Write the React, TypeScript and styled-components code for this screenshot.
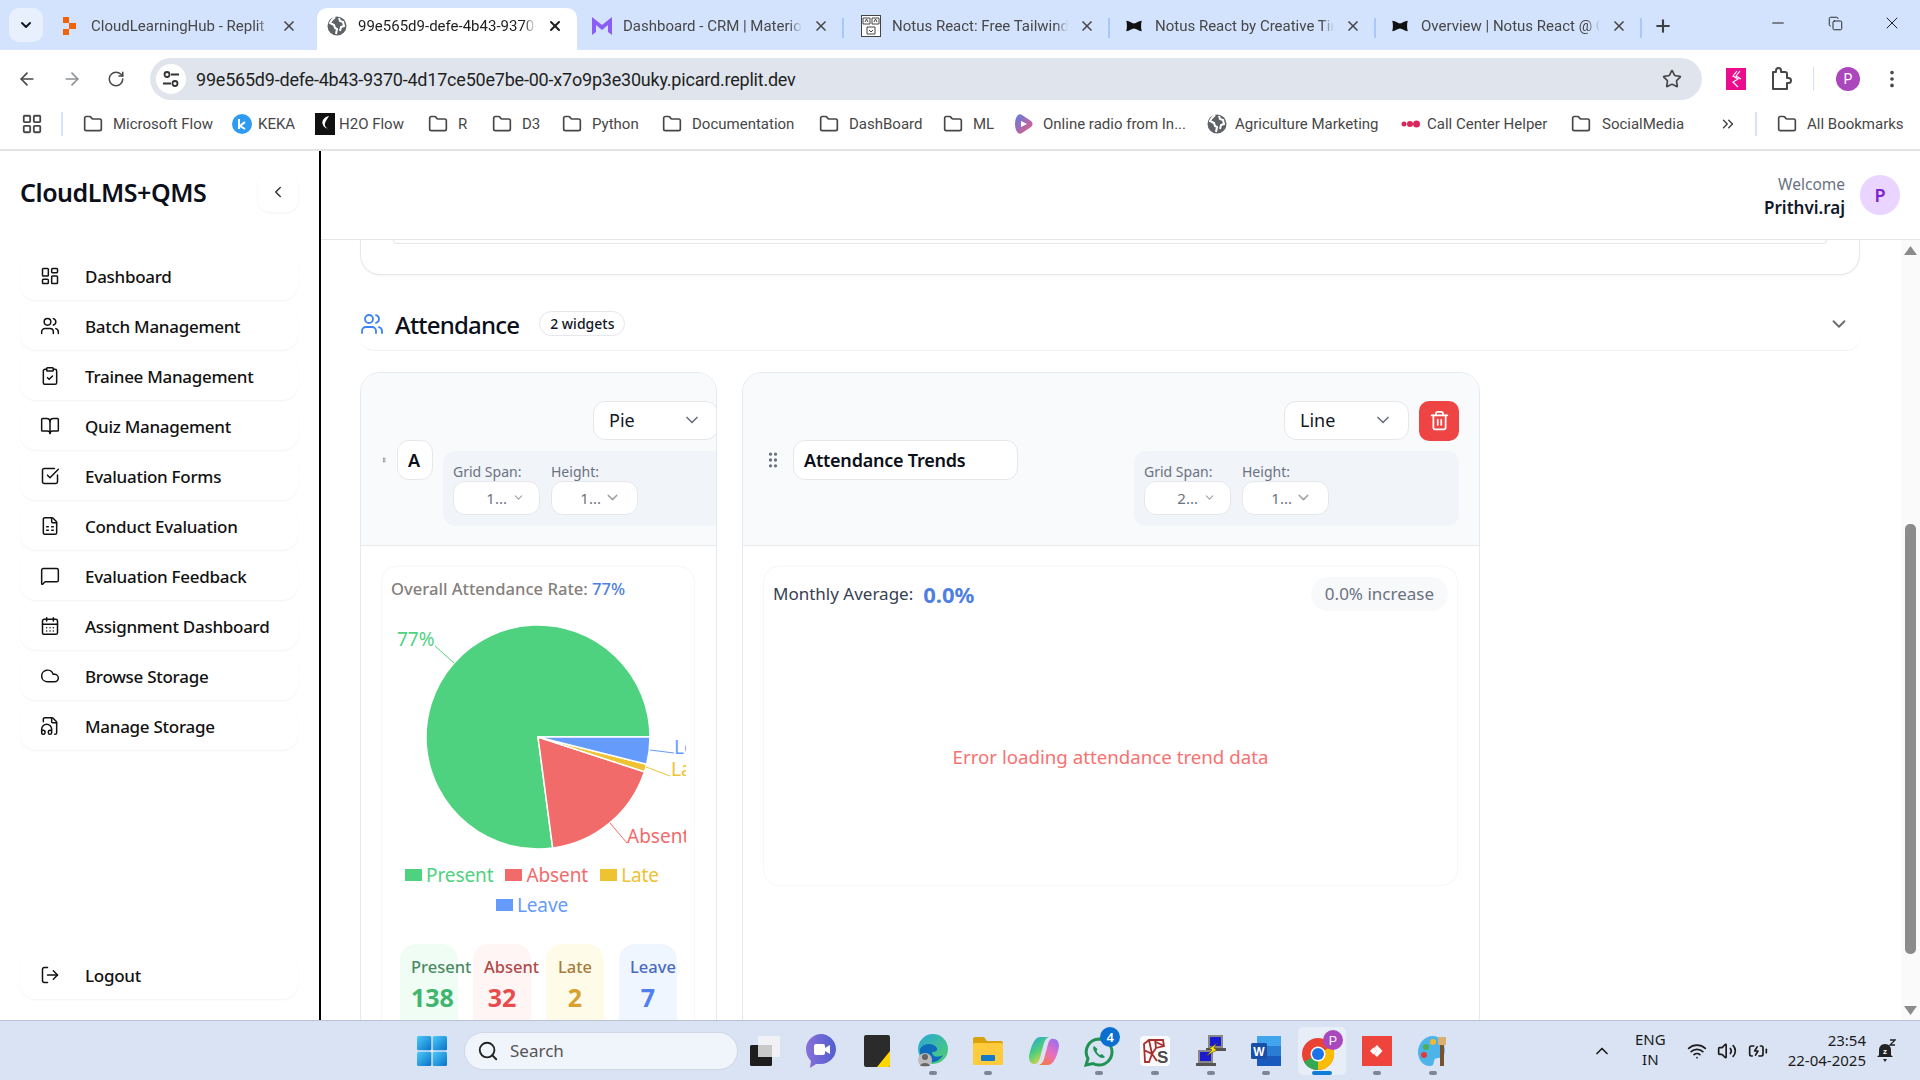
import React from 'react';
import styled, { createGlobalStyle } from 'styled-components';
import {
  ArrowLeft, ArrowRight, BatteryCharging, BookOpen, CalendarDays, ChevronDown, ChevronLeft, ChevronUp,
  ChevronsRight, ClipboardCheck, Cloud, EllipsisVertical, FileAudio2, FileSpreadsheet, Folder,
  GripVertical, LayoutDashboard, LayoutGrid, LogOut, MessageSquare, Minus, Plus, RotateCw, Search,
  SquareCheckBig, Star, Trash2, Users, Volume2, Wifi, X, Copy,
} from 'lucide-react';

const UI = '"Noto Sans", "Open Sans", sans-serif';
const CHROME = 'Roboto, "Noto Sans", sans-serif';

const GlobalStyle = createGlobalStyle`
  html, body { margin: 0; padding: 0; height: 100%; overflow: hidden; background: #fff; }
  #root { height: 100vh; }
  * { box-sizing: border-box; }
`;

const Screen = styled.div`
  height: 1080px;
  display: flex;
  flex-direction: column;
  font-family: ${UI};
  color: #111827;
`;

/* browser chrome */
const TabStrip = styled.div`
  height: 50px;
  background: #d3e3fd;
  display: flex;
  align-items: flex-end;
  padding-left: 9px;
  font-family: ${CHROME};
  flex-shrink: 0;
`;
const TabMenu = styled.div`
  width: 34px;
  height: 34px;
  margin-bottom: 8px;
  margin-right: 2px;
  background: #e8f0fd;
  border-radius: 10px;
  display: flex;
  align-items: center;
  justify-content: center;
`;
const Tab = styled.div<{ $active?: boolean; $width: number; $left: number; $right: number }>`
  width: ${p => p.$width}px;
  height: 42px;
  display: flex;
  align-items: center;
  padding: 0 ${p => p.$right}px 7px ${p => p.$left}px;
  border-radius: 10px 10px 0 0;
  background: ${p => (p.$active ? '#fff' : 'transparent')};
  color: ${p => (p.$active ? '#1f1f1f' : '#474747')};
  flex-shrink: 0;
  gap: 11px;
`;
const TabSep = styled.i`
  width: 2px;
  height: 20px;
  background: #a8c7fa;
  margin: 0 -1px 12px;
  flex-shrink: 0;
`;
const TabIcon = styled.span`
  width: 20px;
  height: 20px;
  display: flex;
  align-items: center;
  justify-content: center;
  flex-shrink: 0;
`;
const TabTitle = styled.span`
  flex: 1;
  font-size: 15px;
  white-space: nowrap;
  overflow: hidden;
  -webkit-mask-image: linear-gradient(90deg, #000 93%, transparent 100%);
  mask-image: linear-gradient(90deg, #000 93%, transparent 100%);
`;
const NewTab = styled.div`
  margin: 0 0 14px 12px;
  color: #3c4043;
  display: flex;
`;
const WindowButtons = styled.div`
  margin-left: auto;
  display: flex;
  align-items: center;
  gap: 1px;
  height: 46px;
  color: #1f1f1f;
  align-self: flex-start;
`;
const WindowButton = styled.div`
  width: 56px;
  display: flex;
  justify-content: center;
`;

const Toolbar = styled.div`
  height: 50px;
  background: #fff;
  display: flex;
  align-items: center;
  padding: 8px 0 0 17px;
  font-family: ${CHROME};
  flex-shrink: 0;
  border-radius: 10px 10px 0 0;
`;
const NavButton = styled.div<{ $muted?: boolean }>`
  width: 45px;
  display: flex;
  color: ${p => (p.$muted ? '#8e9297' : '#474747')};
`;
const UrlBar = styled.div`
  width: 1552px;
  height: 42px;
  margin-left: -2px;
  border-radius: 21px;
  background: #e0e5ed;
  display: flex;
  align-items: center;
  padding: 0 20px 0 6px;
  gap: 10px;
  font-size: 18px;
  letter-spacing: -0.21px;
  color: #1f1f1f;
`;
const SiteInfo = styled.div`
  width: 30px;
  height: 30px;
  border-radius: 50%;
  background: #fff;
  display: flex;
  align-items: center;
  justify-content: center;
`;
const UrlText = styled.span`
  flex: 1;
`;
const ToolbarEnd = styled.div`
  display: flex;
  align-items: center;
  height: 42px;
  margin-left: 24px;
  color: #474747;
`;
const ExtBadge = styled.div`
  width: 20px;
  height: 22px;
  margin-right: 22px;
  background: #ec0c8e;
  display: flex;
  align-items: center;
  justify-content: center;
`;
const ToolSep = styled.i`
  width: 1px;
  height: 24px;
  background: #d3e3fd;
  margin: 0 22px 0 21px;
`;
const ProfileDot = styled.div`
  width: 24px;
  height: 24px;
  border-radius: 50%;
  background: #ab47bc;
  color: #fff;
  font-size: 14px;
  display: flex;
  align-items: center;
  justify-content: center;
  margin-right: 21px;
`;

const Bookmarks = styled.div`
  height: 51px;
  background: #fff;
  display: flex;
  align-items: center;
  font-family: ${CHROME};
  font-size: 15px;
  color: #474747;
  padding: 0 0 1px 21px;
  border-bottom: 2px solid #e3e3e3;
  flex-shrink: 0;
  overflow: hidden;
`;
const AppsIcon = styled.span`
  display: flex;
  flex-shrink: 0;
`;
const BarSep = styled.i`
  width: 2px;
  height: 24px;
  background: #d3e3fd;
  margin: 0 20px 0 18px;
  flex-shrink: 0;
`;
const Mark = styled.div<{ $gap: number }>`
  display: flex;
  align-items: center;
  gap: ${p => p.$gap}px;
  white-space: nowrap;
  margin-right: 22px;
  flex-shrink: 0;
`;
const MarkLabel = styled.span<{ $w: number }>`
  width: ${p => p.$w}px;
  white-space: nowrap;
`;
const MarkIcon = styled.span`
  width: 20px;
  height: 20px;
  display: flex;
  align-items: center;
  justify-content: center;
`;
const MoreMarks = styled.span`
  display: flex;
  margin-left: 16px;
  flex-shrink: 0;
`;

/* application */
const Body = styled.div`
  flex: 1;
  min-height: 0;
  display: flex;
`;
const Sidebar = styled.aside`
  width: 321px;
  border-right: 2px solid #000;
  padding: 21px 21px 21px 20px;
  display: flex;
  flex-direction: column;
  flex-shrink: 0;
`;
const Brand = styled.div`
  display: flex;
  align-items: center;
  justify-content: space-between;
  height: 40px;
  margin-bottom: 40px;
`;
const BrandName = styled.div`
  font-size: 25px;
  font-weight: 600;
  color: #0b0f19;
  letter-spacing: -0.45px;
`;
const CollapseButton = styled.div`
  width: 40px;
  height: 40px;
  border-radius: 12px;
  display: flex;
  align-items: center;
  justify-content: center;
  box-shadow: 0 1px 3px rgba(0, 0, 0, 0.06);
  color: #333;
`;
const NavList = styled.nav`
  display: flex;
  flex-direction: column;
  gap: 2px;
`;
const NavItem = styled.div<{ $bottom?: boolean }>`
  height: 48px;
  border-radius: 16px;
  display: flex;
  align-items: center;
  gap: 25px;
  padding-left: 20px;
  font-size: 17px;
  letter-spacing: -0.28px;
  font-weight: 500;
  color: #111;
  box-shadow: 0 1px 2px rgba(0, 0, 0, 0.05);
  margin-top: ${p => (p.$bottom ? 'auto' : '0')};
`;

const Main = styled.main`
  flex: 1;
  min-width: 0;
  display: flex;
  flex-direction: column;
`;
const TopBar = styled.header`
  height: 89px;
  border-bottom: 1px solid #e5e7eb;
  display: flex;
  align-items: center;
  justify-content: flex-end;
  padding: 0 20px 0 0;
  gap: 15px;
  flex-shrink: 0;
`;
const Welcome = styled.div`
  text-align: right;
  padding-top: 3px;
`;
const WelcomeLabel = styled.div`
  font-size: 15.5px;
  line-height: 22px;
  color: #6b7280;
`;
const WelcomeName = styled.div`
  font-size: 17px;
  line-height: 25px;
  font-weight: 600;
  color: #111827;
`;
const Avatar = styled.div`
  width: 40px;
  height: 40px;
  border-radius: 50%;
  background: #e9d5ff;
  color: #7e22ce;
  font-size: 18px;
  font-weight: 600;
  display: flex;
  align-items: center;
  justify-content: center;
`;
const ScrollArea = styled.div`
  flex: 1;
  min-height: 0;
  display: flex;
  overflow: hidden;
`;
const Content = styled.div`
  flex: 1;
  min-width: 0;
  padding: 0 41px 0 39px;
`;
const CroppedCard = styled.div`
  height: 35px;
  border: 1px solid #e5e7eb;
  border-top: 0;
  border-radius: 0 0 20px 20px;
  padding: 0 32px;
  box-shadow: 0 1px 2px rgba(0, 0, 0, 0.04);
`;
const CroppedInner = styled.div`
  height: 4px;
  border: 1px solid #e5e7eb;
  border-top: 0;
  border-radius: 0 0 12px 12px;
`;
const SectionHead = styled.div`
  height: 54px;
  margin-top: 22px;
  display: flex;
  align-items: center;
  border-bottom: 1px solid #eef0f3;
  border-radius: 0 0 14px 14px;
  padding-right: 10px;
`;
const SectionTitle = styled.h2`
  margin: 2px 0 0 11px;
  font-size: 24px;
  line-height: 34px;
  font-weight: 500;
  letter-spacing: -0.8px;
  color: #0b0f19;
`;
const CountBadge = styled.span`
  margin-left: 20px;
  height: 25px;
  padding: 0 10px;
  border: 1px solid #e5e7eb;
  border-radius: 13px;
  font-size: 14px;
  font-weight: 500;
  display: flex;
  align-items: center;
`;
const SectionToggle = styled.div`
  margin-left: auto;
  display: flex;
  color: #6b6b6b;
`;
const CardGrid = styled.div`
  margin-top: 21px;
  display: grid;
  grid-template-columns: 357px 738px;
  gap: 25px;
`;
const Card = styled.section`
  height: 780px;
  border: 1px solid #e5eaf2;
  border-radius: 20px;
  overflow: hidden;
  background: #fff;
`;
const CardHead = styled.div`
  height: 173px;
  background: #f9fafb;
  border-bottom: 1px solid #e8eaee;
  display: flex;
  align-items: center;
  justify-content: space-between;
  padding: 8px 20px 0;
  gap: 10px;
`;
const TitleGroup = styled.div`
  display: flex;
  align-items: center;
  gap: 10px;
  flex-shrink: 0;
  margin-bottom: 6px;
`;
const Grip = styled.span<{ $tiny?: boolean }>`
  display: flex;
  width: ${p => (p.$tiny ? 6 : 20)}px;
  color: #6b7280;
  justify-content: center;
  flex-shrink: 0;
`;
const TitleInput = styled.div<{ $clip?: boolean }>`
  width: ${p => (p.$clip ? 36 : 225)}px;
  height: 40px;
  border: 1px solid #e5e7eb;
  border-radius: 12px;
  background: #fff;
  font-size: 18px;
  font-weight: 600;
  letter-spacing: -0.22px;
  color: #0b0f19;
  display: flex;
  align-items: center;
  padding-left: 10px;
  overflow: hidden;
  white-space: nowrap;
`;
const Controls = styled.div`
  width: 325px;
  flex-shrink: 0;
  display: flex;
  flex-direction: column;
  gap: 10px;
`;
const ControlRow = styled.div`
  display: flex;
  justify-content: flex-end;
  gap: 10px;
`;
const Picker = styled.div`
  width: 125px;
  height: 39px;
  border: 1px solid #e5e7eb;
  border-radius: 12px;
  background: #fff;
  font-size: 18px;
  color: #111827;
  display: flex;
  align-items: center;
  justify-content: space-between;
  padding: 0 15px;
`;
const DeleteButton = styled.div`
  width: 40px;
  height: 40px;
  border-radius: 10px;
  background: #ef4444;
  color: #fff;
  display: flex;
  align-items: center;
  justify-content: center;
`;
const SizePanel = styled.div`
  height: 75px;
  background: #f1f4f8;
  border-radius: 12px;
  padding: 11px 10px 0;
  display: flex;
  gap: 11px;
`;
const SizeField = styled.div`
  width: 87px;
`;
const SizeLabel = styled.div`
  font-size: 14px;
  line-height: 19px;
  color: #6b7280;
  white-space: nowrap;
`;
const SizeSelect = styled.div<{ $pad: number; $gap: number }>`
  width: 87px;
  height: 34px;
  border: 1px solid #e5e7eb;
  border-radius: 12px;
  background: #fff;
  font-size: 15px;
  color: #6b7280;
  display: flex;
  align-items: center;
  justify-content: flex-end;
  padding-right: ${p => p.$pad}px;
  gap: ${p => p.$gap}px;
`;
const SizeChevron = styled.span`
  display: flex;
  color: #a3a3a3;
`;
const CardBody = styled.div`
  padding: 20px 21px 0 20px;
`;
const PieBox = styled.div`
  border: 1px solid #f7f7f8;
  border-radius: 16px;
  padding: 9px 10px 0 9px;
  height: 560px;
  box-shadow: 0 -1px 2px rgba(0, 0, 0, 0.015);
`;
const RateLine = styled.div`
  font-size: 16.6px;
  line-height: 26px;
  font-weight: 500;
  color: #85807c;
  white-space: nowrap;
`;
const RateValue = styled.span`
  color: #4f7fe3;
`;
const PieChart = styled.svg`
  display: block;
  margin-top: 10px;
  font-family: ${UI};
  font-size: 19px;
`;
const Legend = styled.div`
  margin: 0 11px 0 0;
  display: flex;
  flex-wrap: wrap;
  justify-content: center;
  column-gap: 12px;
  row-gap: 0;
`;
const LegendItem = styled.div<{ $color: string }>`
  display: flex;
  align-items: center;
  gap: 4px;
  height: 30px;
  font-size: 19px;
  letter-spacing: -0.1px;
  color: ${p => p.$color};
`;
const LegendSwatch = styled.i<{ $color: string }>`
  width: 17px;
  height: 12px;
  background: ${p => p.$color};
`;
const StatRow = styled.div`
  margin-top: 24px;
  padding-left: 9px;
  display: flex;
  gap: 15px;
`;
const StatBox = styled.div<{ $bg: string }>`
  width: 58px;
  height: 90px;
  border-radius: 16px;
  background: ${p => p.$bg};
  padding: 10px 11px 0;
  text-align: center;
`;
const StatLabel = styled.div<{ $color: string }>`
  font-size: 16.5px;
  line-height: 26px;
  font-weight: 500;
  color: ${p => p.$color};
  white-space: nowrap;
`;
const StatValue = styled.div<{ $color: string }>`
  font-size: 25px;
  line-height: 34px;
  font-weight: 700;
  color: ${p => p.$color};
`;
const TrendBox = styled.div`
  height: 320px;
  border: 1px solid #f7f7f8;
  border-radius: 16px;
  padding: 9px 9px 0 9px;
  display: flex;
  flex-direction: column;
  box-shadow: 0 -1px 2px rgba(0, 0, 0, 0.015);
`;
const TrendHead = styled.div`
  display: flex;
  align-items: center;
  height: 35px;
`;
const TrendLabel = styled.span`
  font-size: 17px;
  color: #374151;
`;
const TrendValue = styled.span`
  margin-left: 10px;
  font-size: 22px;
  font-weight: 700;
  color: #4f7fe3;
`;
const TrendPill = styled.span`
  margin-left: auto;
  height: 34px;
  border-radius: 17px;
  background: #f8f9fb;
  padding: 0 14px;
  font-size: 17px;
  color: #6b7280;
  display: flex;
  align-items: center;
`;
const TrendError = styled.div`
  flex: 1;
  display: flex;
  align-items: center;
  justify-content: center;
  padding-top: 16px;
  font-size: 18.7px;
  color: #f87171;
`;
const ScrollTrack = styled.div`
  width: 19px;
  background: #fafafa;
  position: relative;
  flex-shrink: 0;
`;
const ScrollArrow = styled.svg<{ $down?: boolean }>`
  position: absolute;
  left: 3px;
  top: ${p => (p.$down ? 'auto' : '6px')};
  bottom: ${p => (p.$down ? '5px' : 'auto')};
`;
const ScrollThumb = styled.div`
  position: absolute;
  left: 4px;
  right: 4px;
  top: 284px;
  height: 430px;
  background: #8b8b8b;
  border-radius: 5px;
`;

/* windows taskbar */
const Taskbar = styled.footer`
  height: 60px;
  background: #d9e3f4;
  border-top: 1px solid #b9c2d1;
  display: flex;
  align-items: center;
  padding-left: 417px;
  flex-shrink: 0;
  font-family: ${UI};
  position: relative;
`;
const SearchBox = styled.div`
  width: 274px;
  height: 38px;
  margin-left: 17px;
  border-radius: 19px;
  background: #f0f4fb;
  border: 1px solid #d0d8e6;
  display: flex;
  align-items: center;
  padding-left: 12px;
  gap: 11px;
  font-size: 17px;
  color: #555;
`;
const AppSlot = styled.div<{ $active?: boolean }>`
  width: 55.6px;
  height: 48px;
  display: flex;
  align-items: center;
  justify-content: center;
  position: relative;
  flex-shrink: 0;
  &::before {
    content: '';
    position: absolute;
    inset: 0 4px;
    border-radius: 5px;
    background: ${p => (p.$active ? '#e8eef8' : 'transparent')};
  }
  svg {
    position: relative;
  }
`;
const AppDot = styled.i<{ $active?: boolean }>`
  position: absolute;
  left: 50%;
  bottom: 0;
  transform: translateX(-50%);
  width: ${p => (p.$active ? 20 : 8)}px;
  height: 4px;
  border-radius: 2px;
  background: ${p => (p.$active ? '#0f7dd6' : '#7d8694')};
`;
const AppBadge = styled.span`
  position: absolute;
  top: 0;
  right: 7px;
  width: 20px;
  height: 20px;
  border-radius: 50%;
  background: #0a6fd0;
  color: #fff;
  font-size: 13px;
  font-weight: 600;
  display: flex;
  align-items: center;
  justify-content: center;
`;
const Tray = styled.div`
  position: absolute;
  right: 0;
  top: 0;
  bottom: 0;
  display: flex;
  align-items: center;
  color: #1b1b1b;
  font-size: 15px;
`;
const TrayIcons = styled.div`
  display: flex;
  align-items: center;
  gap: 10.5px;
  margin: 0 20px 0 21px;
`;
const TrayLang = styled.div`
  display: flex;
  flex-direction: column;
  line-height: 20px;
  text-align: center;
  margin: -3px 0 0 23px;
`;
const TrayClock = styled.div`
  display: flex;
  flex-direction: column;
  line-height: 20px;
  text-align: right;
  margin-top: -2px;
`;
const BellSlot = styled.div`
  width: 54px;
  display: flex;
  justify-content: center;
  padding: 0 24px 0 10px;
`;

/* little drawings */
const ReplitIcon = () => (
  <svg width="14" height="18" viewBox="0 0 14 18"><rect x="0" y="0" width="6" height="6" fill="#f26207" /><rect x="6" y="6" width="7" height="6" fill="#f26207" /><rect x="0" y="12" width="6" height="6" fill="#f26207" /></svg>
);
const GlobeIcon = ({ size = 20 }: { size?: number }) => (
  <svg width={size} height={size} viewBox="0 0 20 20"><circle cx="10" cy="10" r="9.5" fill="#5f6368" /><path d="M8 1c-2 2-4 3-5 6l4 2 1 3 2 1-1 5M12 2l1 3 3 1 1 4-3 1-1 4" stroke="#fff" strokeWidth="2" fill="none" /></svg>
);
const MuiIcon = () => (
  <svg width="20" height="18" viewBox="0 0 20 18"><path d="M0 0l10 8 10-8v18l-4-3V8l-6 5-6-5v7l-4 3z" fill="#8b5cf6" /></svg>
);
const NotusFace = () => (
  <svg width="20" height="22" viewBox="0 0 20 22"><rect x="0.5" y="0.5" width="19" height="21" fill="#fff" stroke="#444" /><path d="M2 3h7v6H2zM11 3h7v6h-7zM6 12h8v7H6z" fill="none" stroke="#444" /><path d="M4 7l1.5-3L7 7M13 7l1.5-3L16 7M8 15l2 2 2-2" fill="none" stroke="#444" /></svg>
);
const BowTie = () => (
  <svg width="18" height="12" viewBox="0 0 20 14"><path d="M1 1c4 0 6 3 9 3s5-3 9-3c-1 4-1 8 0 12-4 0-6-3-9-3s-5 3-9 3c1-4 1-8 0-12z" fill="#111" /></svg>
);
const KekaIcon = () => (
  <svg width="20" height="20" viewBox="0 0 20 20"><circle cx="10" cy="10" r="10" fill="#2f9bf0" /><path d="M7 5v10M13 8l-5 4 5 3" stroke="#fff" strokeWidth="2" fill="none" /></svg>
);
const H2oIcon = () => (
  <svg width="20" height="22" viewBox="0 0 20 22"><rect width="20" height="22" fill="#111" /><path d="M14 3c-5 1-8 5-6 9 1 3 5 3 6 6-2-4-5-4-4-8 1-3 3-5 4-7z" fill="#fff" /></svg>
);
const RadioIcon = () => (
  <svg width="18" height="20" viewBox="0 0 18 20"><defs><linearGradient id="rg" x1="0" y1="0" x2="1" y2="1"><stop offset="0" stopColor="#5b7fe8" /><stop offset="1" stopColor="#ef5a7a" /></linearGradient></defs><path d="M3 1c1-1 3-1 4 0l9 6c2 1.500 2 4.500 0 6l-9 6c-1 1-3 1-4 0-2-2-3-5-3-9s1-7 3-9z" fill="url(#rg)" /><path d="M6 7l6 3-6 3z" fill="#fff" /></svg>
);
const DotsIcon = () => (
  <svg width="20" height="8" viewBox="0 0 20 8"><circle cx="3" cy="4" r="2.500" fill="#d9275e" /><circle cx="9" cy="4" r="3" fill="#d9275e" /><circle cx="15.500" cy="4" r="3.500" fill="#d9275e" /></svg>
);
const TuneIcon = () => (
  <svg width="18" height="18" viewBox="0 0 18 18" fill="none" stroke="#333" strokeWidth="1.800"><circle cx="5" cy="4.500" r="2.500" /><path d="M9 4.500h8M1 13.500h8" /><circle cx="13" cy="13.500" r="2.500" /></svg>
);
const ExtensionIcon = () => (
  <svg width="24" height="24" viewBox="0 0 24 24" fill="none" stroke="#474747" strokeWidth="2" strokeLinejoin="round"><path d="M20.500 11H19V7c0-1.100-.9-2-2-2h-4V3.500C13 2.120 11.880 1 10.500 1S8 2.120 8 3.500V5H5v17h14v-6h1.500c1.380 0 2.500-1.120 2.500-2.500S21.880 11 20.500 11z" /></svg>
);
const StartIcon = () => (
  <svg width="30" height="30" viewBox="0 0 30 30"><defs><linearGradient id="st" x1="0" y1="0" x2="1" y2="1"><stop offset="0" stopColor="#4cc9fb" /><stop offset="1" stopColor="#0a72c8" /></linearGradient></defs><rect width="14.300" height="14.300" rx="1.500" fill="url(#st)" /><rect x="15.700" width="14.300" height="14.300" rx="1.500" fill="url(#st)" /><rect y="15.700" width="14.300" height="14.300" rx="1.500" fill="url(#st)" /><rect x="15.700" y="15.700" width="14.300" height="14.300" rx="1.500" fill="url(#st)" /></svg>
);
const TaskViewIcon = () => (
  <svg width="32" height="30" viewBox="0 0 32 30"><rect x="0" y="9" width="22" height="21" rx="1.500" fill="#1d1d1d" /><rect x="8" y="0" width="22" height="21" rx="1.500" fill="#f4f4f4" fillOpacity=".85" /><rect x="8" y="9" width="14" height="12" fill="#c9c9c9" /></svg>
);
const MeetIcon = () => (
  <svg width="30" height="34" viewBox="0 0 30 34"><defs><linearGradient id="mt" x1="0" y1="0" x2="1" y2="0"><stop offset="0" stopColor="#8a6fd8" /><stop offset="1" stopColor="#4f5fd0" /></linearGradient></defs><path d="M15 0c8 0 15 7 15 15s-7 15-15 15c-2 0-3 0-5 0l-6 4 1-7c-3-3-5-7-5-12C0 7 7 0 15 0z" fill="url(#mt)" /><rect x="8" y="10" width="11" height="11" rx="2" fill="#fff" /><path d="M19 14l5-3v9l-5-3z" fill="#fff" /></svg>
);
const StickyIcon = () => (
  <svg width="26" height="32" viewBox="0 0 26 32"><rect width="26" height="32" rx="2" fill="#2b2b2b" /><path d="M13 32l13-16v14a2 2 0 0 1-2 2z" fill="#ffd600" /></svg>
);
const EdgeIcon = () => (
  <svg width="32" height="34" viewBox="0 0 32 34"><defs><linearGradient id="ed" x1="0" y1="0" x2="1" y2="1"><stop offset="0" stopColor="#2aa7d8" /><stop offset="1" stopColor="#4fd06a" /></linearGradient></defs><circle cx="16" cy="15" r="15" fill="url(#ed)" /><path d="M3 15c3-6 13-7 17-1 1 3-2 4-5 4 0 5 6 6 11 3-3 6-9 8-14 7-6-2-10-7-9-13z" fill="#0f6cbd" /><circle cx="8" cy="26" r="7" fill="#bcbcbc" /><circle cx="8" cy="23" r="3" fill="#666" /><path d="M3 32c1-4 9-4 10 0z" fill="#666" /></svg>
);
const FolderApp = () => (
  <svg width="30" height="28" viewBox="0 0 30 28"><path d="M0 2a2 2 0 0 1 2-2h9l3 4h14a2 2 0 0 1 2 2v2H0z" fill="#d9a20d" /><rect y="6" width="30" height="22" rx="1.500" fill="#ffcb3d" /><rect x="8" y="18" width="14" height="6" rx="1" fill="#1678c8" /></svg>
);
const CopilotIcon = () => (
  <svg width="30" height="28" viewBox="0 0 30 28"><defs><linearGradient id="cpa" x1="0" y1="0" x2="0.6" y2="1"><stop offset="0" stopColor="#1f9fe6" /><stop offset=".55" stopColor="#4fcf7a" /><stop offset="1" stopColor="#f5d040" /></linearGradient><linearGradient id="cpb" x1="0.8" y1="0" x2="0.2" y2="1"><stop offset="0" stopColor="#9b6ff0" /><stop offset=".5" stopColor="#e86fc0" /><stop offset="1" stopColor="#f57a3c" /></linearGradient></defs><path d="M11 0h9c-3 1-4 3-5 6l-4 15c-1 4-3 6-6 6-3 0-5-3-5-7 1-8 5-20 11-20z" fill="url(#cpa)" /><path d="M19 28h-9c3-1 4-3 5-6l4-15c1-4 3-6 6-5 3 0 5 3 5 7-1 8-5 19-11 19z" fill="url(#cpb)" /></svg>
);
const WhatsappIcon = () => (
  <svg width="30" height="32" viewBox="0 0 30 32"><path d="M15 4a13 13 0 0 1 0 26c-2.500 0-4.500-.500-6-1.500L2 30l2-6.500A13 13 0 0 1 15 4z" fill="none" stroke="#1f9254" strokeWidth="3" /><path d="M10 11c-2 2 0 6 3 9s6 4 8 2l-3-3-2 1c-1-.500-3-2.500-3.500-4l1-2z" fill="#1f9254" /></svg>
);
const SnipIcon = () => (
  <svg width="30" height="30" viewBox="0 0 30 30"><rect width="30" height="30" rx="4" fill="#fbfbfb" /><path d="M4 8l5-4h14l1 6-8 2-4 6-3 8H5zM9 4l3 14M4 14l8 4 5 7M16 12l-1-8M24 10l-8-4" stroke="#a92f2f" strokeWidth="1.800" fill="none" /><text x="17" y="27" fontSize="17" fontWeight="700" fill="#4a4a4a" fontFamily="Liberation Sans, sans-serif">S</text></svg>
);
const NetworkIcon = () => (
  <svg width="32" height="32" viewBox="0 0 32 32"><rect x="14" y="1" width="13" height="11" fill="#1a1ad0" stroke="#888" strokeWidth="2" /><rect x="11" y="13" width="20" height="3" fill="#555" /><rect x="4" y="16" width="13" height="11" fill="#1a1ad0" stroke="#888" strokeWidth="2" /><rect x="1" y="28" width="20" height="3" fill="#555" /><path d="M22 8l-8 6 3 1-6 6 11-6-3-2z" fill="#ffe000" stroke="#333" strokeWidth=".6" /></svg>
);
const WordIcon = () => (
  <svg width="30" height="30" viewBox="0 0 30 30"><rect x="6" width="24" height="10" fill="#41a5ee" /><rect x="6" y="10" width="24" height="10" fill="#2b7cd3" /><rect x="6" y="20" width="24" height="10" fill="#185abd" /><rect y="7" width="16" height="16" rx="1.500" fill="#1a4fa8" /><text x="8" y="20" fontSize="12" fontWeight="700" textAnchor="middle" fill="#fff" fontFamily="Liberation Sans, sans-serif">W</text></svg>
);
const ChromeIcon = () => (
  <svg width="44" height="42" viewBox="0 0 44 42"><circle cx="18" cy="24" r="16" fill="#ea4335" /><path d="M18 24L4 32a16 16 0 0 0 14 8z" fill="#34a853" /><path d="M18 24l14-8a16 16 0 0 1-14 24z" fill="#fbbc04" /><circle cx="18" cy="24" r="7.500" fill="#fff" /><circle cx="18" cy="24" r="6" fill="#1a73e8" /><circle cx="33" cy="10" r="10" fill="#ab47bc" /><text x="33" y="14.500" fontSize="12.500" textAnchor="middle" fill="#fff" fontFamily="Liberation Sans, sans-serif">P</text></svg>
);
const AnyDeskIcon = () => (
  <svg width="30" height="30" viewBox="0 0 30 30"><rect width="30" height="30" fill="#ef443b" /><path d="M15 9l5.500 6-5.500 6-3-3 3-3-3-3z" fill="#fff" /><path d="M8 15l3.500-3.500 3.500 3.500-3.500 3.500z" fill="#fff" /></svg>
);
const PaintIcon = () => (
  <svg width="30" height="34" viewBox="0 0 30 34"><path d="M15 2C6 2 0 10 0 18c0 8 5 14 12 14 5 0 3-5 5-7 3-2 7 0 9-4 3-7-2-19-11-19z" fill="#4db4ea" /><circle cx="8" cy="13" r="3" fill="#4caf50" /><circle cx="15" cy="8" r="3" fill="#f5b72d" /><circle cx="6" cy="21" r="3" fill="#e53935" /><rect x="22" y="9" width="4" height="23" fill="#7a5230" /><rect x="20" y="3" width="8" height="8" fill="#d8b070" /></svg>
);
const SnoozeBell = () => (
  <svg width="20" height="24" viewBox="0 0 20 24"><path d="M9 5c4 0 6 3 6 6v5l2 2H1l2-2v-5c0-3 2-6 6-6zM7 20h4l-2 3z" fill="#222" /><text x="9" y="15" fontSize="8" fontWeight="700" fill="#fff" textAnchor="middle" fontFamily="Liberation Sans, sans-serif">z</text><path d="M14 1h5l-5 5h5" fill="none" stroke="#222" strokeWidth="1.300" /></svg>
);

const polar = (cx: number, cy: number, r: number, deg: number) => {
  const a = (deg * Math.PI) / 180;
  return [cx + r * Math.cos(a), cy - r * Math.sin(a)];
};
const wedge = (cx: number, cy: number, r: number, from: number, to: number) => {
  const [x1, y1] = polar(cx, cy, r, from);
  const [x2, y2] = polar(cx, cy, r, to);
  const large = to - from > 180 ? 1 : 0;
  return `M${cx} ${cy}L${x1} ${y1}A${r} ${r} 0 ${large} 0 ${x2} ${y2}Z`;
};

const COLORS = { present: '#4fd27f', absent: '#f26b6b', late: '#efc232', leave: '#659bfb' };
const slices = [
  { value: 138, color: COLORS.present },
  { value: 32, color: COLORS.absent },
  { value: 2, color: COLORS.late },
  { value: 7, color: COLORS.leave },
];

const AttendancePie = () => {
  let angle = 0;
  return (
    <PieChart width={295} height={248} viewBox="0 0 295 248">
      {slices.map(s => {
        const from = angle;
        angle += (s.value / 179) * 360;
        return <path key={s.color} d={wedge(147, 125, 112, from, angle)} fill={s.color} stroke="#fff" strokeWidth="1.500" />;
      })}
      <path d="M44 34L63 51" stroke={COLORS.present} fill="none" />
      <text x="6" y="34" fill={COLORS.present}>77%</text>
      <path d="M259 138L283 141" stroke={COLORS.leave} fill="none" />
      <text x="283" y="142" fill={COLORS.leave}>Leave</text>
      <path d="M255 155L279 164" stroke={COLORS.late} fill="none" />
      <text x="280" y="164" fill={COLORS.late}>Late</text>
      <path d="M219 211L236 231" stroke={COLORS.absent} fill="none" />
      <text x="236" y="231" fill={COLORS.absent}>Absent</text>
    </PieChart>
  );
};

const tabs = [
  { title: 'Dashboard - CRM | Materio - Material UI', icon: <MuiIcon />, left: 15 },
  { title: 'Notus React: Free Tailwind CSS UI Kit', icon: <NotusFace />, left: 18 },
  { title: 'Notus React by Creative Tim', icon: <BowTie />, left: 15 },
  { title: 'Overview | Notus React @ Creative', icon: <BowTie />, left: 15 },
];

const folder = <Folder size={20} strokeWidth={2} />;
const marks = [
  { label: 'Microsoft Flow', w: 97, gap: 10, icon: folder },
  { label: 'KEKA', w: 35, gap: 6, icon: <KekaIcon /> },
  { label: 'H2O Flow', w: 67, gap: 4, icon: <H2oIcon /> },
  { label: 'R', w: 12, gap: 10, icon: folder },
  { label: 'D3', w: 18, gap: 10, icon: folder },
  { label: 'Python', w: 48, gap: 10, icon: folder },
  { label: 'Documentation', w: 105, gap: 10, icon: folder },
  { label: 'DashBoard', w: 72, gap: 10, icon: folder },
  { label: 'ML', w: 19, gap: 10, icon: folder },
  { label: 'Online radio from In...', w: 142, gap: 9, icon: <RadioIcon /> },
  { label: 'Agriculture Marketing', w: 144, gap: 8, icon: <GlobeIcon /> },
  { label: 'Call Center Helper', w: 122, gap: 6, icon: <DotsIcon /> },
  { label: 'SocialMedia', w: 79, gap: 11, icon: folder },
];

const nav = [
  { label: 'Dashboard', Icon: LayoutDashboard },
  { label: 'Batch Management', Icon: Users },
  { label: 'Trainee Management', Icon: ClipboardCheck },
  { label: 'Quiz Management', Icon: BookOpen },
  { label: 'Evaluation Forms', Icon: SquareCheckBig },
  { label: 'Conduct Evaluation', Icon: FileSpreadsheet },
  { label: 'Evaluation Feedback', Icon: MessageSquare },
  { label: 'Assignment Dashboard', Icon: CalendarDays },
  { label: 'Browse Storage', Icon: Cloud },
  { label: 'Manage Storage', Icon: FileAudio2 },
];

const stats = [
  { label: 'Present', value: 138, bg: '#f0fdf4', text: '#4b8a65', num: '#3fb56f' },
  { label: 'Absent', value: 32, bg: '#fef5f4', text: '#b04a4a', num: '#e84c4c' },
  { label: 'Late', value: 2, bg: '#fefce8', text: '#a67c3c', num: '#d9a030' },
  { label: 'Leave', value: 7, bg: '#eff6ff', text: '#4a6bc0', num: '#4f7ff0' },
];

const apps: { icon: React.ReactNode; dot?: boolean; active?: boolean; badge?: string }[] = [
  { icon: <TaskViewIcon /> },
  { icon: <MeetIcon /> },
  { icon: <StickyIcon /> },
  { icon: <EdgeIcon />, dot: true },
  { icon: <FolderApp />, dot: true },
  { icon: <CopilotIcon /> },
  { icon: <WhatsappIcon />, dot: true, badge: '4' },
  { icon: <SnipIcon />, dot: true },
  { icon: <NetworkIcon />, dot: true },
  { icon: <WordIcon />, dot: true },
  { icon: <ChromeIcon />, dot: true, active: true },
  { icon: <AnyDeskIcon />, dot: true },
  { icon: <PaintIcon />, dot: true },
];

const WidgetControls = ({ type, span }: { type: string; span: string }) => (
  <Controls>
    <ControlRow>
      <Picker>
        {type}
        <ChevronDown size={20} color="#6b7280" />
      </Picker>
      <DeleteButton>
        <Trash2 size={21} />
      </DeleteButton>
    </ControlRow>
    <SizePanel>
      <SizeField>
        <SizeLabel>Grid Span:</SizeLabel>
        <SizeSelect $pad={14} $gap={5}>
          {span}
          <SizeChevron><ChevronDown size={13} /></SizeChevron>
        </SizeSelect>
      </SizeField>
      <SizeField>
        <SizeLabel>Height:</SizeLabel>
        <SizeSelect $pad={16} $gap={3}>
          1...
          <SizeChevron><ChevronDown size={17} /></SizeChevron>
        </SizeSelect>
      </SizeField>
    </SizePanel>
  </Controls>
);

export default function App() {
  return (
    <Screen>
      <GlobalStyle />
      <TabStrip>
        <TabMenu><ChevronDown size={16} strokeWidth={3} /></TabMenu>
        <Tab $width={272} $left={15} $right={20}>
          <TabIcon><ReplitIcon /></TabIcon>
          <TabTitle>CloudLearningHub - Replit</TabTitle>
          <X size={16} strokeWidth={2.5} />
        </Tab>
        <Tab $active $width={260} $left={10} $right={14}>
          <TabIcon><GlobeIcon /></TabIcon>
          <TabTitle>99e565d9-defe-4b43-9370-4d17ce50e7be</TabTitle>
          <X size={16} strokeWidth={3} />
        </Tab>
        {tabs.map(t => (
          <React.Fragment key={t.title}>
            <Tab $width={266} $left={t.left} $right={14}>
              <TabIcon>{t.icon}</TabIcon>
              <TabTitle>{t.title}</TabTitle>
              <X size={16} strokeWidth={2.5} />
            </Tab>
            <TabSep />
          </React.Fragment>
        ))}
        <NewTab><Plus size={20} strokeWidth={2.5} /></NewTab>
        <WindowButtons>
          <WindowButton><Minus size={18} strokeWidth={1.5} /></WindowButton>
          <WindowButton><Copy size={15} strokeWidth={1.5} /></WindowButton>
          <WindowButton><X size={20} strokeWidth={1.2} /></WindowButton>
        </WindowButtons>
      </TabStrip>

      <Toolbar>
        <NavButton><ArrowLeft size={20} /></NavButton>
        <NavButton $muted><ArrowRight size={20} /></NavButton>
        <NavButton><RotateCw size={18} /></NavButton>
        <UrlBar>
          <SiteInfo><TuneIcon /></SiteInfo>
          <UrlText>99e565d9-defe-4b43-9370-4d17ce50e7be-00-x7o9p3e30uky.picard.replit.dev</UrlText>
          <Star size={20} color="#474747" strokeWidth={2} />
        </UrlBar>
        <ToolbarEnd>
          <ExtBadge>
            <svg width="12" height="18" viewBox="0 0 12 18"><path d="M7 1L3 6l5 3-5 3 5 5M10 1L6 6l5 3" fill="none" stroke="#fff" strokeWidth="1.200" /></svg>
          </ExtBadge>
          <ExtensionIcon />
          <ToolSep />
          <ProfileDot>P</ProfileDot>
          <EllipsisVertical size={22} />
        </ToolbarEnd>
      </Toolbar>

      <Bookmarks>
        <AppsIcon><LayoutGrid size={22} /></AppsIcon>
        <BarSep />
        {marks.map(m => (
          <Mark key={m.label} $gap={m.gap}>
            <MarkIcon>{m.icon}</MarkIcon>
            <MarkLabel $w={m.w}>{m.label}</MarkLabel>
          </Mark>
        ))}
        <MoreMarks><ChevronsRight size={18} /></MoreMarks>
        <BarSep />
        <Mark $gap={10}>
          <MarkIcon>{folder}</MarkIcon>
          All Bookmarks
        </Mark>
      </Bookmarks>

      <Body>
        <Sidebar>
          <Brand>
            <BrandName>CloudLMS+QMS</BrandName>
            <CollapseButton><ChevronLeft size={18} /></CollapseButton>
          </Brand>
          <NavList>
            {nav.map(({ label, Icon }) => (
              <NavItem key={label}>
                <Icon size={20} strokeWidth={1.8} />
                {label}
              </NavItem>
            ))}
          </NavList>
          <NavItem $bottom>
            <LogOut size={20} strokeWidth={1.8} />
            Logout
          </NavItem>
        </Sidebar>

        <Main>
          <TopBar>
            <Welcome>
              <WelcomeLabel>Welcome</WelcomeLabel>
              <WelcomeName>Prithvi.raj</WelcomeName>
            </Welcome>
            <Avatar>P</Avatar>
          </TopBar>
          <ScrollArea>
            <Content>
              <CroppedCard><CroppedInner /></CroppedCard>
              <SectionHead>
                <Users size={24} color="#3b82f6" strokeWidth={1.8} />
                <SectionTitle>Attendance</SectionTitle>
                <CountBadge>2 widgets</CountBadge>
                <SectionToggle><ChevronDown size={22} /></SectionToggle>
              </SectionHead>
              <CardGrid>
                <Card>
                  <CardHead>
                    <TitleGroup>
                      <Grip $tiny><GripVertical size={10} /></Grip>
                      <TitleInput $clip>A</TitleInput>
                    </TitleGroup>
                    <WidgetControls type="Pie" span="1..." />
                  </CardHead>
                  <CardBody>
                    <PieBox>
                      <RateLine>Overall Attendance Rate: <RateValue>77%</RateValue></RateLine>
                      <AttendancePie />
                      <Legend>
                        <LegendItem $color={COLORS.present}><LegendSwatch $color={COLORS.present} />Present</LegendItem>
                        <LegendItem $color={COLORS.absent}><LegendSwatch $color={COLORS.absent} />Absent</LegendItem>
                        <LegendItem $color={COLORS.late}><LegendSwatch $color={COLORS.late} />Late</LegendItem>
                        <LegendItem $color={COLORS.leave}><LegendSwatch $color={COLORS.leave} />Leave</LegendItem>
                      </Legend>
                      <StatRow>
                        {stats.map(s => (
                          <StatBox key={s.label} $bg={s.bg}>
                            <StatLabel $color={s.text}>{s.label}</StatLabel>
                            <StatValue $color={s.num}>{s.value}</StatValue>
                          </StatBox>
                        ))}
                      </StatRow>
                    </PieBox>
                  </CardBody>
                </Card>
                <Card>
                  <CardHead>
                    <TitleGroup>
                      <Grip><GripVertical size={20} /></Grip>
                      <TitleInput>Attendance Trends</TitleInput>
                    </TitleGroup>
                    <WidgetControls type="Line" span="2..." />
                  </CardHead>
                  <CardBody>
                    <TrendBox>
                      <TrendHead>
                        <TrendLabel>Monthly Average:</TrendLabel>
                        <TrendValue>0.0%</TrendValue>
                        <TrendPill>0.0% increase</TrendPill>
                      </TrendHead>
                      <TrendError>Error loading attendance trend data</TrendError>
                    </TrendBox>
                  </CardBody>
                </Card>
              </CardGrid>
            </Content>
            <ScrollTrack>
              <ScrollArrow width="13" height="9" viewBox="0 0 13 9"><path d="M6.500 0L13 9H0z" fill="#8b8b8b" /></ScrollArrow>
              <ScrollThumb />
              <ScrollArrow $down width="13" height="9" viewBox="0 0 13 9"><path d="M6.500 9L13 0H0z" fill="#8b8b8b" /></ScrollArrow>
            </ScrollTrack>
          </ScrollArea>
        </Main>
      </Body>

      <Taskbar>
        <StartIcon />
        <SearchBox>
          <Search size={22} color="#222" />
          Search
        </SearchBox>
        {apps.map((a, i) => (
          <AppSlot key={i} $active={a.active}>
            {a.icon}
            {a.badge && <AppBadge>{a.badge}</AppBadge>}
            {a.dot && <AppDot $active={a.active} />}
          </AppSlot>
        ))}
        <Tray>
          <ChevronUp size={20} />
          <TrayLang>
            <span>ENG</span>
            <span>IN</span>
          </TrayLang>
          <TrayIcons>
            <Wifi size={20} />
            <Volume2 size={20} />
            <BatteryCharging size={20} />
          </TrayIcons>
          <TrayClock>
            <span>23:54</span>
            <span>22-04-2025</span>
          </TrayClock>
          <BellSlot><SnoozeBell /></BellSlot>
        </Tray>
      </Taskbar>
    </Screen>
  );
}
